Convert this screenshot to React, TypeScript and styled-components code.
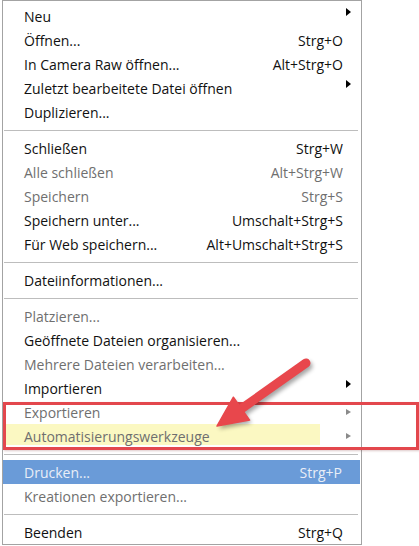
import React from "react";
import styled, { createGlobalStyle, css } from "styled-components";

const Global = createGlobalStyle`
  html, body { margin: 0; padding: 0; background: #ffffff; }
  body { width: 419px; height: 546px; overflow: hidden; }
`;

const Page = styled.div`
  position: relative;
  width: 419px;
  height: 546px;
  font-family: "Open Sans", "Noto Sans", sans-serif;
  font-size: 14px;
`;

const Menu = styled.div`
  margin-left: 2px;
  width: 360px;
  height: 545px;
  box-sizing: border-box;
  border: 1px solid #a3a3a3;
  padding-top: 3px;
  background: #ffffff;
`;

const Row = styled.div<{ $disabled?: boolean; $active?: boolean; $marked?: boolean }>`
  display: grid;
  grid-template-columns: 1fr auto 18px;
  align-items: center;
  height: 24px;
  padding-left: 21px;
  color: ${(p) => (p.$disabled ? "#6f6f6f" : "#111111")};
  white-space: nowrap;
  ${(p) =>
    p.$active &&
    css`
      background: #6a9bd8;
      color: #e9eef7;
      margin-right: 1px;
    `}
  ${(p) =>
    p.$marked &&
    css`
      background: linear-gradient(#fbf8c2, #fbf8c2) no-repeat 1px 0 / 316px 21px;
    `}
`;

const Label = styled.span``;

const Shortcut = styled.span`
  text-align: right;
`;

const SubArrow = styled.span<{ $disabled?: boolean }>`
  justify-self: start;
  margin-left: 3px;
  width: 0;
  height: 0;
  border-style: solid;
  ${(p) =>
    p.$disabled
      ? css`
          border-width: 3.5px 0 3.5px 5px;
          border-color: transparent transparent transparent #8a8a8a;
          margin-top: -1px;
        `
      : css`
          border-width: 4.5px 0 4.5px 5px;
          border-color: transparent transparent transparent #000000;
          margin-top: -8px;
        `}
`;

const Separator = styled.div`
  height: 12px;
  display: flex;
  align-items: center;
  padding: 0 3px 0 1px;
  &::after {
    content: "";
    flex: 1;
    height: 1px;
    background: #bdbdbd;
  }
`;

const RedBox = styled.div`
  position: absolute;
  left: 3px;
  top: 402px;
  width: 416px;
  height: 48px;
  box-sizing: border-box;
  border: 3px solid #e3474d;
  box-shadow: 1px 1px 2px rgba(120, 40, 40, 0.25);
  pointer-events: none;
`;

const ArrowOverlay = styled.svg`
  position: absolute;
  left: 0;
  top: 0;
  pointer-events: none;
`;

type Item =
  | { sep: true }
  | {
      sep?: false;
      label: string;
      shortcut?: string;
      sub?: boolean;
      disabled?: boolean;
      active?: boolean;
      marked?: boolean;
    };

const items: Item[] = [
  { label: "Neu", sub: true },
  { label: "Öffnen...", shortcut: "Strg+O" },
  { label: "In Camera Raw öffnen...", shortcut: "Alt+Strg+O" },
  { label: "Zuletzt bearbeitete Datei öffnen", sub: true },
  { label: "Duplizieren..." },
  { sep: true },
  { label: "Schließen", shortcut: "Strg+W" },
  { label: "Alle schließen", shortcut: "Alt+Strg+W", disabled: true },
  { label: "Speichern", shortcut: "Strg+S", disabled: true },
  { label: "Speichern unter...", shortcut: "Umschalt+Strg+S" },
  { label: "Für Web speichern...", shortcut: "Alt+Umschalt+Strg+S" },
  { sep: true },
  { label: "Dateiinformationen..." },
  { sep: true },
  { label: "Platzieren...", disabled: true },
  { label: "Geöffnete Dateien organisieren..." },
  { label: "Mehrere Dateien verarbeiten...", disabled: true },
  { label: "Importieren", sub: true },
  { label: "Exportieren", sub: true, disabled: true },
  { label: "Automatisierungswerkzeuge", sub: true, disabled: true, marked: true },
  { sep: true },
  { label: "Drucken...", shortcut: "Strg+P", active: true },
  { label: "Kreationen exportieren...", disabled: true },
  { sep: true },
  { label: "Beenden", shortcut: "Strg+Q" },
];

export default function App() {
  // arrow geometry
  const tail = { x: 306, y: 363 };
  const tip = { x: 217, y: 426 };
  const dx = tip.x - tail.x;
  const dy = tip.y - tail.y;
  const len = Math.hypot(dx, dy);
  const ux = dx / len;
  const uy = dy / len;
  const nx = -uy;
  const ny = ux;
  const headLen = 30;
  const headHalf = 14;
  const base = { x: tip.x - ux * headLen, y: tip.y - uy * headLen };
  const w1 = { x: base.x + nx * headHalf, y: base.y + ny * headHalf };
  const w2 = { x: base.x - nx * headHalf, y: base.y - ny * headHalf };
  const shaftEnd = { x: base.x + ux * 4, y: base.y + uy * 4 };
  const head = `${tip.x},${tip.y} ${w1.x},${w1.y} ${w2.x},${w2.y}`;

  return (
    <Page>
      <Global />
      <Menu>
        {items.map((it, i) =>
          it.sep ? (
            <Separator key={i} />
          ) : (
            <Row key={i} $disabled={it.disabled} $active={it.active} $marked={it.marked}>
              <Label>{it.label}</Label>
              <Shortcut>{it.shortcut ?? ""}</Shortcut>
              {it.sub ? <SubArrow $disabled={it.disabled} /> : <span />}
            </Row>
          )
        )}
      </Menu>
      <RedBox />
      <ArrowOverlay width="419" height="546" viewBox="0 0 419 546">
        <defs>
          <filter id="sh" x="-20%" y="-20%" width="140%" height="140%">
            <feGaussianBlur stdDeviation="2" />
          </filter>
        </defs>
        <g opacity="0.35" transform="translate(2,3)" filter="url(#sh)">
          <line x1={tail.x} y1={tail.y} x2={shaftEnd.x} y2={shaftEnd.y} stroke="#000" strokeWidth="9" strokeLinecap="round" />
          <polygon points={head} fill="#000" />
        </g>
        <line x1={tail.x} y1={tail.y} x2={shaftEnd.x} y2={shaftEnd.y} stroke="#e8474c" strokeWidth="9" strokeLinecap="round" />
        <polygon points={head} fill="#e8474c" stroke="#e8474c" strokeWidth="1.5" strokeLinejoin="round" />
      </ArrowOverlay>
    </Page>
  );
}
